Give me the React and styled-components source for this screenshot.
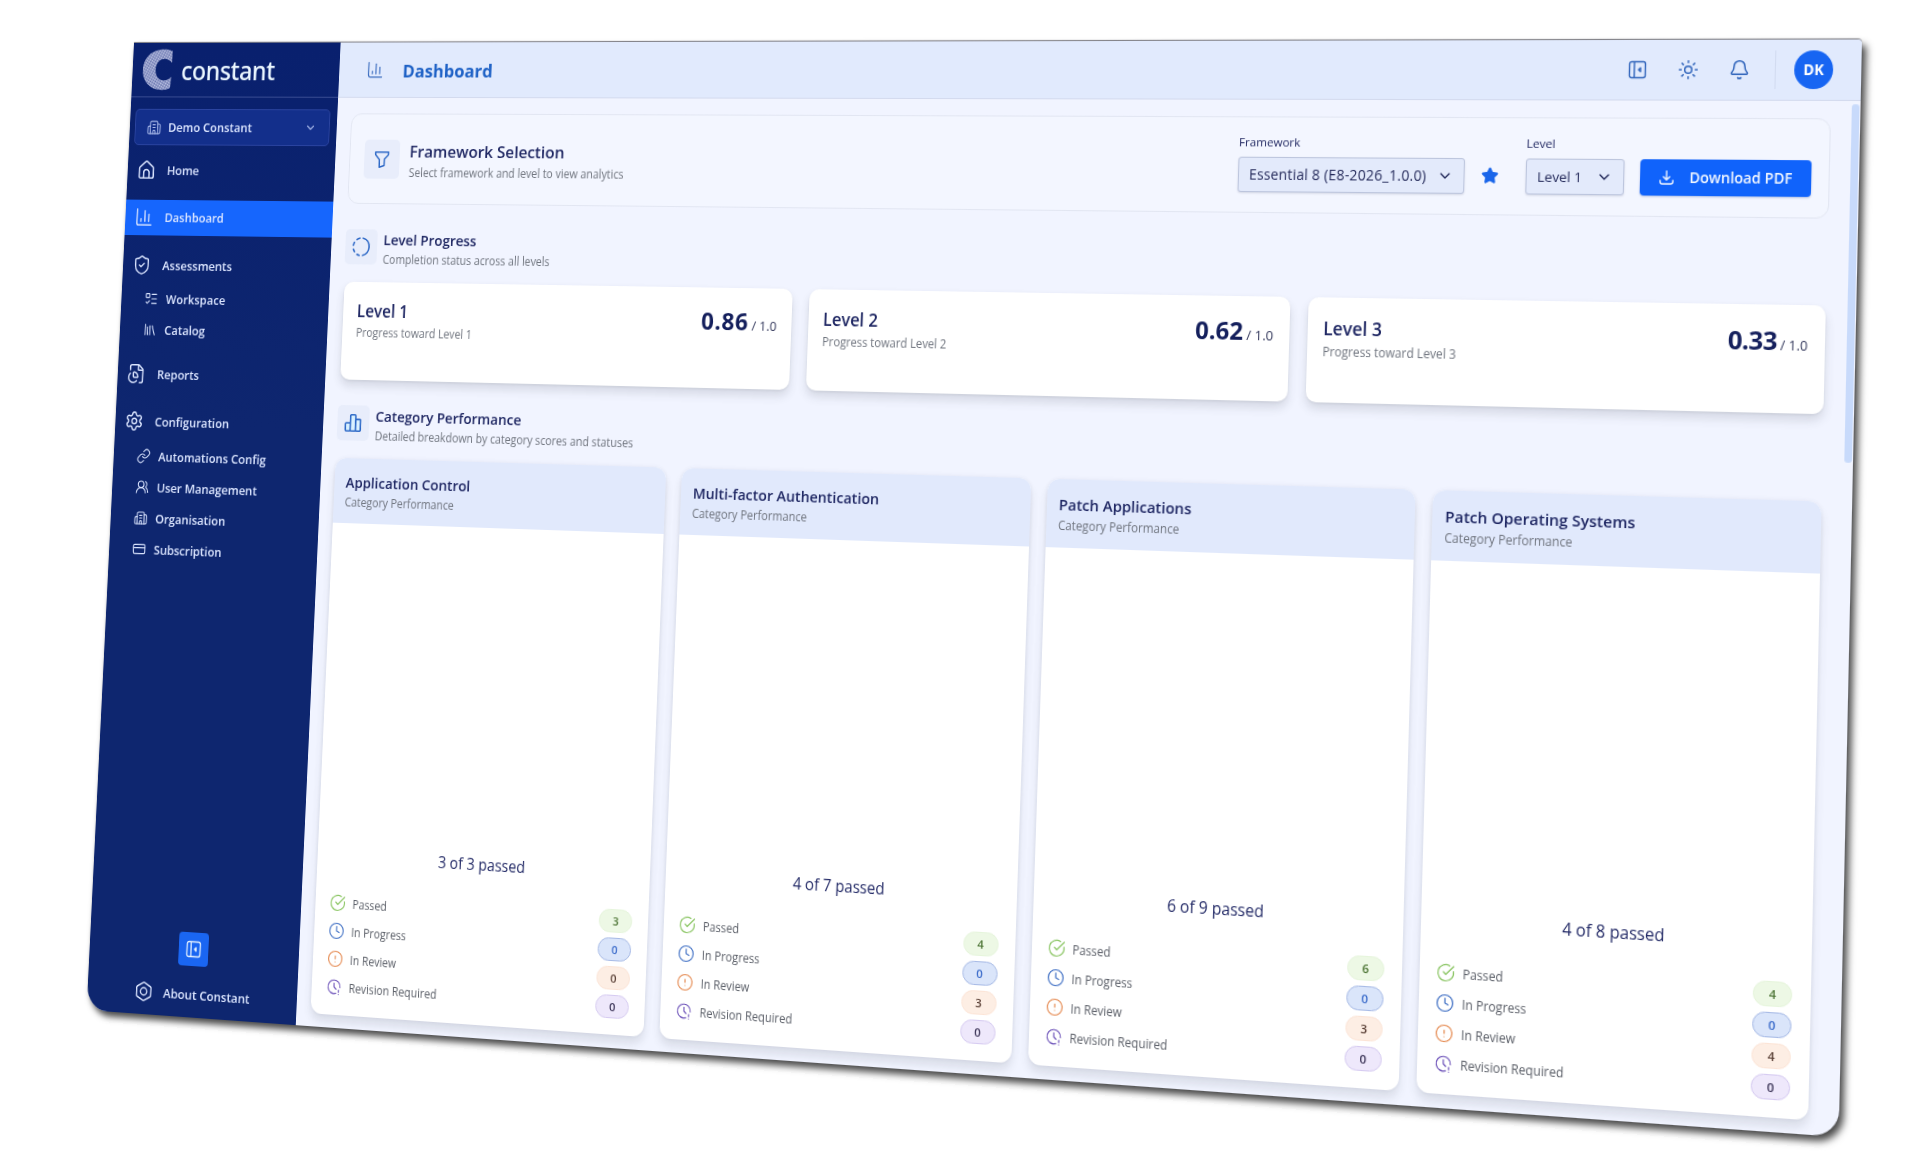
import styled, { createGlobalStyle } from "styled-components";
import {
  Bell,
  Bolt,
  Building2,
  ChartColumn,
  ChevronDown,
  CircleAlert,
  CircleCheckBig,
  Clock,
  CreditCard,
  FileChartPie,
  Library,
  Link,
  ListTodo,
  Settings,
  ShieldCheck,
  Star,
  Sun,
  UsersRound,
} from "lucide-react";
import { TbClockExclamation, TbFilter, TbProgress } from "react-icons/tb";

const WIDTH = 1800;
const HEIGHT = 1000;

// Where the window corners land on the page: top left, top right, bottom right, bottom left
const CORNERS = [
  [134, 43],
  [1862, 39.5],
  [1838.7, 1137],
  [86.6, 1010],
];

const project = ([[x0, y0], [x1, y1], [x2, y2], [x3, y3]]) => {
  const dx1 = x1 - x2;
  const dx2 = x3 - x2;
  const dx3 = x0 - x1 + x2 - x3;
  const dy1 = y1 - y2;
  const dy2 = y3 - y2;
  const dy3 = y0 - y1 + y2 - y3;
  const det = dx1 * dy2 - dx2 * dy1;
  const g = (dx3 * dy2 - dx2 * dy3) / det;
  const h = (dx1 * dy3 - dx3 * dy1) / det;
  const col1 = [x1 - x0 + g * x1, y1 - y0 + g * y1, 0, g].map((n) => n / WIDTH);
  const col2 = [x3 - x0 + h * x3, y3 - y0 + h * y3, 0, h].map((n) => n / HEIGHT);
  const all = [...col1, ...col2, 0, 0, 1, 0, x0, y0, 0, 1];
  return `matrix3d(${all.map((n) => n.toFixed(10)).join(",")})`;
};

const levels = [
  { name: "Level 1", score: "0.86", tracking: 0.7 },
  { name: "Level 2", score: "0.62", tracking: 0 },
  { name: "Level 3", score: "0.33", tracking: -0.6 },
];

const categories = [
  { name: "Application Control", summary: "3 of 3 passed", counts: [3, 0, 0, 0] },
  { name: "Multi-factor Authentication", summary: "4 of 7 passed", counts: [4, 0, 3, 0] },
  { name: "Patch Applications", summary: "6 of 9 passed", counts: [6, 0, 3, 0] },
  { name: "Patch Operating Systems", summary: "4 of 8 passed", counts: [4, 0, 4, 0] },
];

const statuses = [
  { label: "Passed", icon: CircleCheckBig, color: "#8cc665", bg: "#edf8e5", border: "#e6f5dc", text: "#4c7434" },
  { label: "In Progress", icon: Clock, color: "#3f6fc4", bg: "#dae5fa", border: "#a8bbe6", text: "#3d6dcb" },
  { label: "In Review", icon: CircleAlert, color: "#e58a51", bg: "#fdeee4", border: "#fce4d6", text: "#5c4238" },
  { label: "Revision Required", icon: TbClockExclamation, color: "#6f55ba", bg: "#eee8fb", border: "#d6cbf1", text: "#3c3558" },
];

const HomeIcon = () => (
  <svg width="22" height="22" viewBox="0 0 24 24" fill="none" stroke="currentColor" strokeWidth="1.8" strokeLinejoin="round">
    <path d="M3 10.2a2 2 0 0 1 .7-1.5l7-6a2 2 0 0 1 2.6 0l7 6a2 2 0 0 1 .7 1.5V19a2 2 0 0 1-2 2H5a2 2 0 0 1-2-2z" />
    <path d="M8.5 21v-6a3.5 3.5 0 0 1 7 0v6" />
  </svg>
);

const CollapseIcon = () => (
  <svg width="20" height="20" viewBox="0 0 24 24" fill="none" stroke="currentColor" strokeWidth="1.7" strokeLinejoin="round">
    <rect x="3" y="3" width="18" height="18" rx="2.5" />
    <path d="M8.5 3v18" />
    <path d="M15.5 9.800 13.300 12l2.200 2.200z" fill="currentColor" />
  </svg>
);

const DownloadIcon = () => (
  <svg width="16" height="16" viewBox="0 0 24 24" fill="none" stroke="currentColor" strokeWidth="2" strokeLinecap="round" strokeLinejoin="round">
    <path d="M12 3v12M7.5 11l4.5 4.5 4.5-4.5" />
    <path d="M3 16v2a3 3 0 0 0 3 3h12a3 3 0 0 0 3-3v-2" />
  </svg>
);

const BarsIcon = () => (
  <svg width="22" height="22" viewBox="0 0 24 24" fill="#d9f1ff" stroke="currentColor" strokeWidth="1.8" strokeLinejoin="round">
    <rect x="2.5" y="12" width="6" height="9" rx="1" />
    <rect x="8.5" y="3" width="6.5" height="18" rx="1" />
    <rect x="15" y="8" width="6" height="13" rx="1" />
  </svg>
);

const Logo = () => (
  <svg width="36" height="44" viewBox="0 0 36 44">
    <defs>
      <pattern id="grain" width="2.6" height="2.6" patternUnits="userSpaceOnUse" patternTransform="rotate(28)">
        <rect width="2.6" height="2.6" fill="#8f99c8" />
        <circle cx="0.7" cy="0.7" r="0.6" fill="#dfe3f6" />
        <circle cx="2" cy="1.9" r="0.5" fill="#3f4e92" />
      </pattern>
    </defs>
    <path
      d="M35 2.4V15c-2-2.600-5.200-4.200-9-4.200-6 0-10 4.600-10 11.200s4 11.200 10 11.200c3.600 0 6.600-1.400 8.600-3.800L34 41c-3 1.500-6 2.200-9.500 2.200C10.600 43.200 1 34.400 1 22S10.800.8 25 .8c3.800 0 7 .5 10 1.600z"
      fill="url(#grain)"
    />
  </svg>
);

const SectionTitle = ({ icon, title, text, large }) => (
  <SectionHead $large={large}>
    <IconTile $large={large}>{icon}</IconTile>
    <SectionText $large={large}>
      <Heading $large={large}>{title}</Heading>
      <SubText>{text}</SubText>
    </SectionText>
  </SectionHead>
);

const Sidebar = () => (
  <Side>
    <Brand>
      <Logo />
      <BrandName>constant</BrandName>
    </Brand>
    <OrgSelect>
      <Building2 size={17} strokeWidth={1.6} />
      <span>Demo Constant</span>
      <ChevronDown size={14} />
    </OrgSelect>
    <Nav>
      <NavItem><HomeIcon />Home</NavItem>
      <NavItem $active><ChartColumn size={22} strokeWidth={1.6} />Dashboard</NavItem>
      <NavItem><ShieldCheck size={22} strokeWidth={1.6} />Assessments</NavItem>
      <SubNav>
        <SubItem><ListTodo size={16} strokeWidth={1.7} />Workspace</SubItem>
        <SubItem><Library size={16} strokeWidth={1.7} />Catalog</SubItem>
      </SubNav>
      <NavItem><FileChartPie size={22} strokeWidth={1.7} />Reports</NavItem>
      <NavItem><Settings size={22} strokeWidth={1.7} />Configuration</NavItem>
      <SubNav>
        <SubItem><Link size={16} strokeWidth={1.7} />Automations Config</SubItem>
        <SubItem><UsersRound size={16} strokeWidth={1.7} />User Management</SubItem>
        <SubItem><Building2 size={16} strokeWidth={1.7} />Organisation</SubItem>
        <SubItem><CreditCard size={16} strokeWidth={1.7} />Subscription</SubItem>
      </SubNav>
    </Nav>
    <SideFooter>
      <CollapseButton><CollapseIcon /></CollapseButton>
      <About><Bolt size={22} strokeWidth={1.6} />About Constant</About>
    </SideFooter>
  </Side>
);

const LevelCard = ({ level }) => (
  <LevelBox>
    <div>
      <LevelName>{level.name}</LevelName>
      <SubText>Progress toward {level.name}</SubText>
    </div>
    <Score $tracking={level.tracking}>
      <strong>{level.score}</strong> / 1.0
    </Score>
  </LevelBox>
);

const CategoryCard = ({ category }) => (
  <CategoryBox>
    <CategoryHead>
      <Heading>{category.name}</Heading>
      <SubText>Category Performance</SubText>
    </CategoryHead>
    <CategoryBody>
      <Summary>{category.summary}</Summary>
      {statuses.map((status, i) => {
        const { label, icon: Icon, color, bg, border, text } = status;
        return (
          <StatusRow key={label}>
            <StatusLabel $color={color}>
              <Icon size={18} strokeWidth={1.6} />
              {label}
            </StatusLabel>
            <Pill $bg={bg} $border={border} $text={text}>{category.counts[i]}</Pill>
          </StatusRow>
        );
      })}
    </CategoryBody>
  </CategoryBox>
);

const App = () => (
  <>
    <GlobalStyle />
    <Stage>
      <Window>
        <Sidebar />
        <Main>
          <TopBar>
            <ChartColumn size={20} strokeWidth={1.5} />
            <PageTitle>Dashboard</PageTitle>
            <TopActions>
              <CollapseIcon />
              <Sun size={20} strokeWidth={1.8} />
              <Bell size={20} strokeWidth={1.8} />
            </TopActions>
            <Avatar>DK</Avatar>
          </TopBar>
          <Body>
            <Content>
              <FilterPanel>
                <SectionTitle
                  large
                  icon={<TbFilter size={22} strokeWidth={1.7} />}
                  title="Framework Selection"
                  text="Select framework and level to view analytics"
                />
                <Filters>
                  <Field>
                    <Label>Framework</Label>
                    <Select $width={223} $tracking={0.2}>Essential 8 (E8-2026_1.0.0)<ChevronDown size={16} /></Select>
                  </Field>
                  <Favourite><Star size={17} fill="currentColor" /></Favourite>
                  <Field>
                    <Label>Level</Label>
                    <Select $width={94}>Level 1<ChevronDown size={16} /></Select>
                  </Field>
                  <Download><DownloadIcon />Download PDF</Download>
                </Filters>
              </FilterPanel>

              <SectionTitle
                icon={<TbProgress size={24} strokeWidth={1.7} />}
                title="Level Progress"
                text="Completion status across all levels"
              />
              <LevelGrid>
                {levels.map((level) => <LevelCard key={level.name} level={level} />)}
              </LevelGrid>

              <SectionTitle
                icon={<BarsIcon />}
                title="Category Performance"
                text="Detailed breakdown by category scores and statuses"
              />
              <CategoryGrid>
                {categories.map((category) => <CategoryCard key={category.name} category={category} />)}
              </CategoryGrid>
            </Content>
            <ScrollTrack><ScrollThumb /></ScrollTrack>
          </Body>
        </Main>
      </Window>
    </Stage>
  </>
);

export default App;

const GlobalStyle = createGlobalStyle`
  * {
    box-sizing: border-box;
  }

  body {
    margin: 0;
    background: #fff;
    font-family: "Open Sans", "Noto Sans", sans-serif;
  }

  svg {
    flex-shrink: 0;
  }
`;

const Stage = styled.div`
  width: 1920px;
  height: 1152px;
  overflow: hidden;
`;

const Window = styled.div`
  display: flex;
  width: ${WIDTH}px;
  height: ${HEIGHT}px;
  transform: ${project(CORNERS)};
  transform-origin: 0 0;
  border-radius: 0 4px 24px 24px;
  overflow: hidden;
  background: #f1f4ff;
  box-shadow: 0 -1px 1px rgba(40, 40, 50, 0.6), 4px 5px 7px rgba(0, 0, 0, 0.72);
`;

const Side = styled.aside`
  display: flex;
  flex-direction: column;
  width: 240px;
  flex-shrink: 0;
  background: linear-gradient(#09206e, #0e266f 40%, #0e266f);
  color: #dbe5ff;
`;

const Brand = styled.div`
  display: flex;
  align-items: center;
  gap: 10px;
  height: 57px;
  padding-left: 11px;
  border-bottom: 1px solid #3a4d93;
`;

const BrandName = styled.span`
  font-family: "Noto Sans", sans-serif;
  font-size: 27px;
  font-weight: 500;
  letter-spacing: -0.5px;
  line-height: 34px;
  padding-top: 2px;
  color: #eaf6ff;
`;

const OrgSelect = styled.div`
  display: flex;
  align-items: center;
  gap: 8px;
  height: 38px;
  margin: 12px 8px 0 6px;
  padding: 0 14px 0 13px;
  border: 1px solid #2b44a0;
  border-radius: 5px;
  background: #132f8b;
  font-size: 13px;
  font-weight: 600;

  span {
    flex: 1;
  }

  svg {
    color: #a9b9ea;
  }
`;

const Nav = styled.nav`
  display: flex;
  flex-direction: column;
  gap: 12px;
  padding-top: 7px;
`;

const NavItem = styled.div`
  display: flex;
  align-items: center;
  gap: 13px;
  height: 37.5px;
  padding-left: 11px;
  background: ${({ $active }) => ($active ? "#1666fd" : "transparent")};
  font-size: 13px;
  font-weight: 600;
`;

const SubNav = styled.div`
  display: flex;
  flex-direction: column;
  margin-top: -11.4px;
  margin-bottom: -1px;
`;

const SubItem = styled.div`
  display: flex;
  align-items: center;
  gap: 9px;
  height: 32px;
  padding-left: 27px;
  font-size: 13px;
  font-weight: 600;
`;

const SideFooter = styled.div`
  display: flex;
  flex-direction: column;
  align-items: center;
  gap: 10px;
  margin-top: auto;
  padding-bottom: 4px;
`;

const CollapseButton = styled.button`
  display: flex;
  align-items: center;
  justify-content: center;
  width: 34px;
  height: 34px;
  padding: 0;
  border: none;
  border-radius: 4px;
  background: #1a66f2;
  color: #e6f2ff;
`;

const About = styled.div`
  display: flex;
  align-items: center;
  gap: 12px;
  height: 38px;
  font-size: 13.1px;
  font-weight: 600;
`;

const Main = styled.main`
  display: flex;
  flex: 1;
  flex-direction: column;
  min-width: 0;
`;

const TopBar = styled.header`
  display: flex;
  align-items: center;
  height: 57px;
  padding: 0 26px 0 31px;
  border-bottom: 1px solid #d3daee;
  background: #e1eafd;
  color: #3568bd;
`;

const PageTitle = styled.h1`
  flex: 1;
  margin: 0 0 0 21px;
  font-size: 18.6px;
  font-weight: 700;
  color: #1f62c6;
`;

const TopActions = styled.div`
  display: flex;
  align-items: center;
  gap: 28px;
  height: 36px;
  padding-right: 23px;
  border-right: 1px solid #d2dbf0;
`;

const Avatar = styled.div`
  display: flex;
  align-items: center;
  justify-content: center;
  width: 36px;
  height: 36px;
  margin-left: 17px;
  border-radius: 50%;
  background: #1765f2;
  color: #fff;
  font-size: 13.5px;
  font-weight: 700;
`;

const Body = styled.div`
  display: flex;
  flex: 1;
  min-height: 0;
`;

const Content = styled.div`
  flex: 1;
  min-width: 0;
  padding: 16px 19px 0 16px;
`;

const ScrollTrack = styled.div`
  width: 8px;
  padding: 3px 1px 0 0;
`;

const ScrollThumb = styled.div`
  height: 330px;
  border-radius: 3px;
  background: #c8dafb;
`;

const FilterPanel = styled.section`
  display: flex;
  align-items: center;
  justify-content: space-between;
  height: 93px;
  margin-bottom: 26px;
  padding: 0 16px;
  border: 1px solid #e2e6f2;
  border-radius: 12px;
  background: #f3f6ff;
`;

const SectionHead = styled.div`
  display: flex;
  align-items: center;
  gap: ${({ $large }) => ($large ? 11 : 7)}px;
  margin-bottom: ${({ $large }) => ($large ? 0 : 18)}px;
  height: ${({ $large }) => ($large ? 40 : 36)}px;
`;

const SectionText = styled.div`
  padding-top: ${({ $large }) => ($large ? 3 : 1)}px;
`;

const IconTile = styled.div`
  display: flex;
  align-items: center;
  justify-content: center;
  width: ${({ $large }) => ($large ? 40 : 36)}px;
  height: ${({ $large }) => ($large ? 40 : 36)}px;
  border-radius: 5px;
  background: #e8edfb;
  color: #2b67c6;
`;

const Heading = styled.h2`
  margin: 0;
  font-size: ${({ $large }) => ($large ? 17 : 15)}px;
  font-weight: 600;
  line-height: ${({ $large }) => ($large ? 24 : 22)}px;
  color: #1f2763;
`;

const SubText = styled.p`
  margin: 0;
  font-size: 11.7px;
  line-height: 18px;
  color: #70757f;
`;

const Filters = styled.div`
  display: flex;
  align-items: flex-end;
  padding-bottom: 4px;
`;

const Field = styled.div`
  display: flex;
  flex-direction: column;
  gap: 6px;
`;

const Label = styled.label`
  font-size: 11.6px;
  font-weight: 500;
  line-height: 16px;
  color: #232a63;
`;

const Select = styled.div`
  display: flex;
  align-items: center;
  justify-content: space-between;
  width: ${({ $width }) => $width}px;
  height: 34px;
  padding: 0 10px 0 10px;
  border: 1px solid #bcc5dd;
  border-radius: 3px;
  background: #e3eafb;
  box-shadow: 0 1px 2px rgba(40, 50, 90, 0.15);
  font-size: ${({ $tracking }) => ($tracking ? 13.9 : 13.3)}px;
  font-weight: 500;
  letter-spacing: ${({ $tracking }) => $tracking || 0}px;
  white-space: nowrap;
  color: #262c5c;
`;

const Favourite = styled.div`
  display: flex;
  align-items: center;
  height: 34px;
  margin: 0 26px 0 16px;
  color: #1a66ea;
`;

const Download = styled.button`
  display: flex;
  align-items: center;
  justify-content: center;
  gap: 13px;
  width: 160px;
  height: 34px;
  margin-left: 15px;
  padding: 0;
  border: none;
  border-radius: 4px;
  background: #1063fb;
  box-shadow: 0 1px 2px rgba(16, 60, 160, 0.3);
  color: #f0f6ff;
  font-family: inherit;
  font-size: 13.7px;
  font-weight: 600;
`;

const LevelGrid = styled.div`
  display: grid;
  grid-template-columns: repeat(3, 1fr);
  gap: 17.5px;
  margin: 0 1px 26px;
`;

const LevelBox = styled.article`
  display: flex;
  justify-content: space-between;
  height: 100px;
  padding: 18px 16px 18px 15.5px;
  border-radius: 10px;
  background: #fff;
  box-shadow: 0 6px 10px rgba(60, 66, 80, 0.16), 0 1px 3px rgba(60, 66, 80, 0.08);
`;

const LevelName = styled.h3`
  margin: 0;
  font-size: 17.3px;
  font-weight: 600;
  line-height: 24px;
  color: #1f2763;
`;

const Score = styled.div`
  font-size: ${({ $tracking }) => ($tracking < 0 ? 12.4 : 13.2)}px;
  line-height: 30px;
  color: #33385c;

  strong {
    font-size: 24px;
    font-weight: 700;
    letter-spacing: ${({ $tracking }) => $tracking}px;
    color: #141f5c;
  }
`;

const CategoryGrid = styled.div`
  display: grid;
  grid-template-columns: repeat(4, 1fr);
  gap: 17px;
  margin-right: 1px;
`;

const CategoryBox = styled.article`
  display: flex;
  flex-direction: column;
  height: 561px;
  border-radius: 12px;
  overflow: hidden;
  background: #fff;
  box-shadow: 0 7px 8px rgba(60, 66, 80, 0.13), 0 0 4px rgba(70, 80, 130, 0.08);
`;

const CategoryHead = styled.div`
  height: 66px;
  padding: 13px 12.5px 0;
  background: #e1e9fc;
`;

const CategoryBody = styled.div`
  display: flex;
  flex: 1;
  flex-direction: column;
  justify-content: flex-end;
  gap: 4px;
  padding: 16px 17px 16px 16px;
`;

const Summary = styled.div`
  margin-bottom: 19.5px;
  text-align: center;
  font-size: 15.6px;
  font-weight: 500;
  line-height: 24px;
  color: #252c68;
`;

const StatusRow = styled.div`
  display: flex;
  align-items: center;
  justify-content: space-between;
  height: 24px;
`;

const StatusLabel = styled.span`
  display: flex;
  align-items: center;
  gap: 7.5px;
  font-size: 11.7px;
  color: #5c6069;

  svg {
    color: ${({ $color }) => $color};
  }
`;

const Pill = styled.span`
  display: flex;
  align-items: center;
  justify-content: center;
  width: 36px;
  height: 23px;
  border: 1px solid ${({ $border }) => $border};
  border-radius: 12px;
  background: ${({ $bg }) => $bg};
  color: ${({ $text }) => $text};
  font-size: 11.5px;
  font-weight: 600;
`;
